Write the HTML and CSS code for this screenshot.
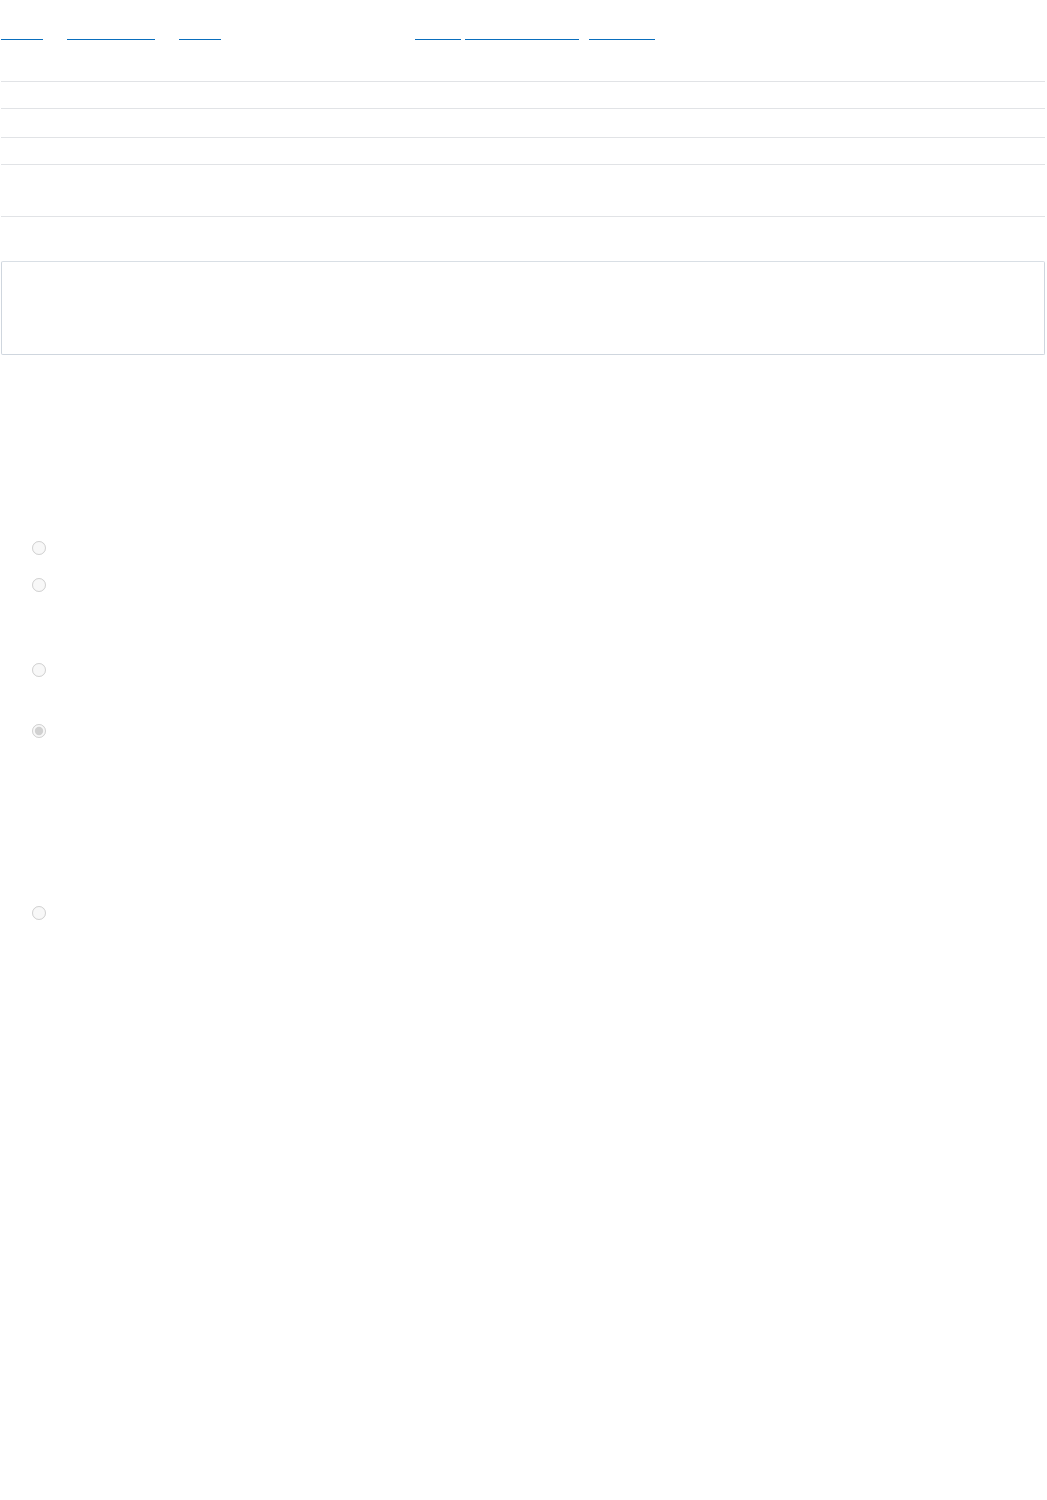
FILE: index.html
```html
<!DOCTYPE html>
<html lang="en">
<head>
    <meta charset="UTF-8">
    <meta name="viewport" content="width=device-width, initial-scale=1.0">
    <title>Page</title>
    <link rel="stylesheet" href="styles.css">
</head>
<body>

    <nav class="topnav">
        <div class="nav-group nav-left">
            <a class="nav-link link-a" href="#" aria-label="link"></a>
            <a class="nav-link link-b" href="#" aria-label="link"></a>
            <a class="nav-link link-c" href="#" aria-label="link"></a>
        </div>
        <div class="nav-group nav-right">
            <a class="nav-link link-d" href="#" aria-label="link"></a>
            <a class="nav-link link-e" href="#" aria-label="link"></a>
            <a class="nav-link link-f" href="#" aria-label="link"></a>
        </div>
    </nav>

    <div class="rows">
        <div class="row row-1"></div>
        <div class="row row-2"></div>
        <div class="row row-3"></div>
        <div class="row row-4"></div>
    </div>

    <div class="panel"></div>

    <form class="options">
        <div class="option opt-1"><input type="radio" name="choice" disabled aria-label="option"></div>
        <div class="option opt-2"><input type="radio" name="choice" disabled aria-label="option"></div>
        <div class="option opt-3"><input type="radio" name="choice" disabled aria-label="option"></div>
        <div class="option opt-4"><input type="radio" name="choice" disabled checked aria-label="option"></div>
        <div class="option opt-5"><input type="radio" name="choice" disabled aria-label="option"></div>
    </form>

</body>
</html>
```

FILE: styles.css
```css
body {
    margin: 0;
    font-family: "Liberation Sans", Arial, sans-serif;
    background-color: #fff;
}
.topnav {
    display: flex;
    padding-top: 39px;
    margin-left: 1px;
}
.nav-group {
    display: flex;
}
.nav-left {
    gap: 24px;
}
.nav-right {
    margin-left: 194px;
}
.nav-link {
    display: block;
    height: 0;
    border-bottom: 1px solid #0a6ebd;
}
.link-a { width: 42px; }
.link-b { width: 88px; }
.link-c { width: 42px; }
.link-d { width: 46px; }
.link-e { width: 114px; margin-left: 4px; }
.link-f { width: 66px; margin-left: 10px; }

.rows {
    margin: 41px 0 0 1px;
    width: 1044px;
}
.row {
    border-top: 1px solid #e1e3e6;
}
.row-1 { height: 26px; }
.row-2 { height: 28px; }
.row-3 { height: 26px; }
.row-4 {
    height: 51px;
    border-bottom: 1px solid #e1e3e6;
}

.panel {
    margin: 44px 0 0 1px;
    width: 1042px;
    height: 92px;
    border: 1px solid #cfd6de;
    border-top-color: #d9dfe5;
    border-radius: 2px;
}

.options {
    display: flex;
    flex-direction: column;
    margin: 183px 0 0;
    padding-left: 28px;
}
.option {
    display: flex;
    align-items: flex-start;
}
.option input {
    width: 14px;
    height: 14px;
    margin: 3px 3px 0 4px;
}
.opt-1 { height: 37px; }
.opt-2 { height: 85px; }
.opt-3 { height: 61px; }
.opt-4 { height: 182px; }
.opt-5 { height: 37px; }
```
